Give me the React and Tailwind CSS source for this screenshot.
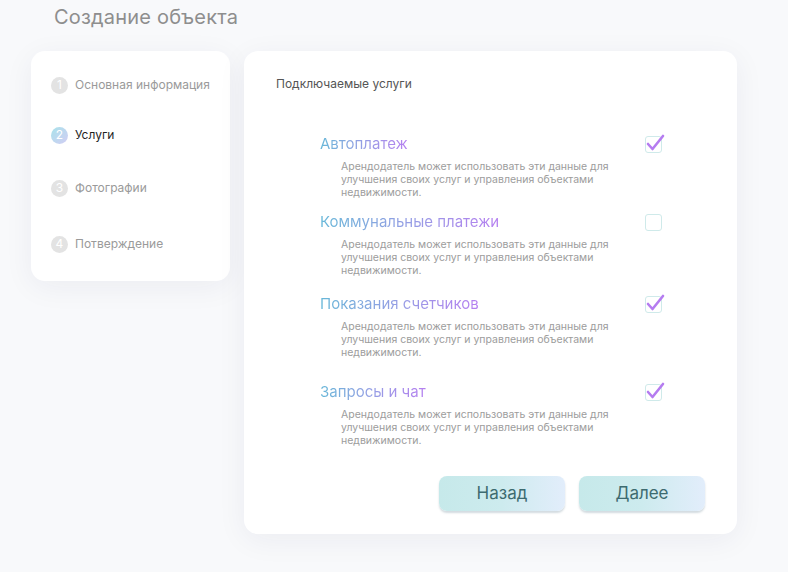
import React from "react";

const steps = [
  { n: 1, label: "Основная информация", mt: "mt-0" },
  { n: 2, label: "Услуги", mt: "mt-[30px]", active: true },
  { n: 3, label: "Фотографии", mt: "mt-[33px]" },
  { n: 4, label: "Потверждение", mt: "mt-[36px]" },
];

const services = [
  { title: "Автоплатеж", checked: true, mt: "mt-0" },
  { title: "Коммунальные платежи", checked: false, mt: "mt-[13px]" },
  { title: "Показания счетчиков", checked: true, mt: "mt-[17px]" },
  { title: "Запросы и чат", checked: true, mt: "mt-[23px]" },
];

const Checkbox = ({ checked }) => (
  <div className="relative w-[17px] h-[17px] rounded-[3px] border-[1.5px] border-[#cfeaea] bg-white">
    {checked && (
      <svg
        className="absolute -left-[1px] -top-[4px]"
        width="20"
        height="20"
        viewBox="0 0 20 20"
        fill="none"
      >
        <path
          d="M3 11 L7.5 16 L18 3"
          stroke="#b57cf0"
          strokeWidth="2.6"
          strokeLinecap="round"
          strokeLinejoin="round"
        />
      </svg>
    )}
  </div>
);

const App = () => {
  return (
    <div
      className="min-h-screen bg-[#f8f9fb] text-[#222]"
      style={{ fontFamily: "Inter, 'Noto Sans', sans-serif" }}
    >
      {/* Page title */}
      <div className="h-[51px] pl-[54px] pt-[4px]">
        <h1 className="text-[20px] leading-[26px] text-[#8e8e8e] font-normal tracking-[0.2px]">
          Создание объекта
        </h1>
      </div>

      <div className="flex items-start gap-[14px] pl-[31px]">
        {/* Steps sidebar */}
        <div className="w-[199px] h-[230px] bg-white rounded-[14px] shadow-[0_6px_30px_rgba(30,40,80,0.06)] pt-[24px] pl-[20px]">
          {steps.map((s) => (
            <div key={s.n} className={`flex items-center h-[20px] gap-[7px] ${s.mt}`}>
              <div
                className={
                  s.active
                    ? "w-[17px] h-[17px] rounded-full bg-gradient-to-br from-[#a6e2ea] to-[#d2cdf4] flex items-center justify-center text-white text-[12px]"
                    : "w-[17px] h-[17px] rounded-full bg-[#e3e3e3] flex items-center justify-center text-white text-[12px]"
                }
              >
                {s.n}
              </div>
              <span
                className={
                  s.active
                    ? "text-[12px] text-[#1f1f1f]"
                    : "text-[12px] text-[#9a9a9a]"
                }
              >
                {s.label}
              </span>
            </div>
          ))}
        </div>

        {/* Services card */}
        <div className="w-[493px] bg-white rounded-[14px] shadow-[0_6px_30px_rgba(30,40,80,0.06)] pt-[25px] pb-[23px]">
          <div className="pl-[32px] text-[12px] leading-[16px] text-[#555]">
            Подключаемые услуги
          </div>

          <div className="mt-[42px] pl-[76px] pr-[75px]">
            {services.map((s) => (
              <div key={s.title} className={s.mt}>
                <div className="flex items-center justify-between h-[20px]">
                  <span className="inline-block text-[15px] leading-[20px] bg-gradient-to-r from-[#66b7d8] to-[#b57ff0] bg-clip-text text-transparent">
                    {s.title}
                  </span>
                  <Checkbox checked={s.checked} />
                </div>
                <p className="mt-[6px] pl-[21px] w-[290px] text-[10.5px] leading-[13px] text-[#9c9c9c]">
                  Арендодатель может использовать эти данные для улучшения своих
                  услуг и управления объектами недвижимости.
                </p>
              </div>
            ))}
          </div>

          <div className="mt-[29px] flex justify-end gap-[14px] pr-[32px]">
            <button className="w-[126px] h-[35px] rounded-[8px] bg-gradient-to-r from-[#c6e9ea] via-[#cdebee] to-[#e2edfb] shadow-[0_2px_2px_rgba(80,110,130,0.25)] text-[17px] text-[#3d6b70]">
              Назад
            </button>
            <button className="w-[126px] h-[35px] rounded-[8px] bg-gradient-to-r from-[#c6e9ea] via-[#cdebee] to-[#e2edfb] shadow-[0_2px_2px_rgba(80,110,130,0.25)] text-[17px] text-[#3d6b70]">
              Далее
            </button>
          </div>
        </div>
      </div>
    </div>
  );
};

export default App;
